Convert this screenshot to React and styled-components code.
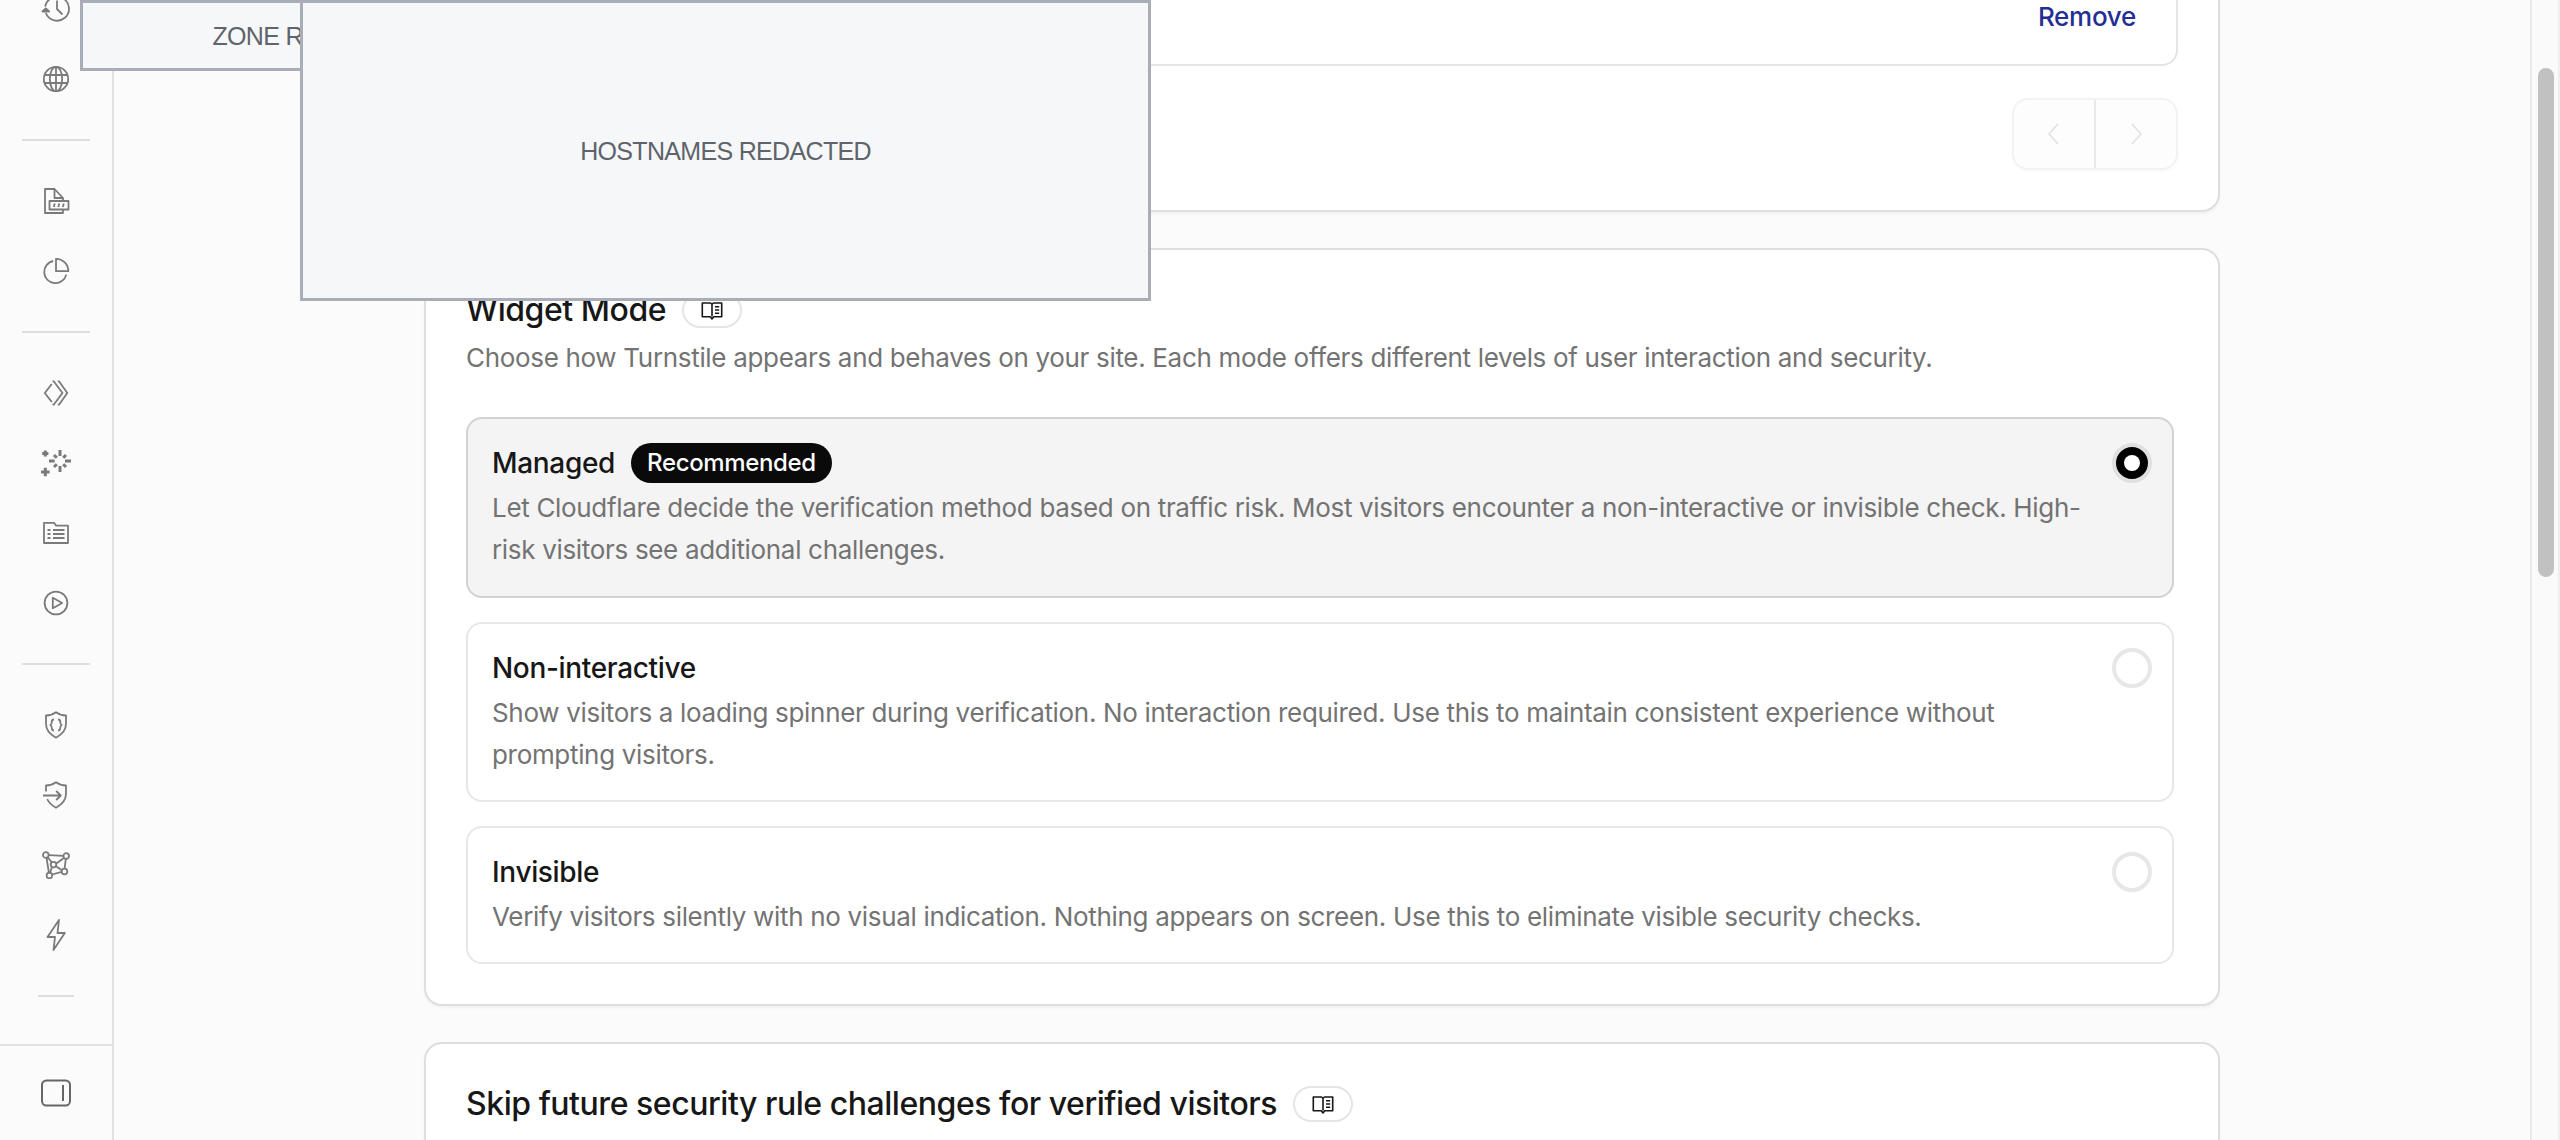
import React from "react";
import styled, { createGlobalStyle } from "styled-components";

const GlobalStyle = createGlobalStyle`
  * {
    box-sizing: border-box;
  }
  body {
    margin: 0;
    background-color: #fbfbfb;
    font-family: Inter, "Liberation Sans", sans-serif;
    -webkit-font-smoothing: antialiased;
  }
  h2, h3, p {
    margin: 0;
  }
`;

const Page = styled.div`
  position: relative;
  display: flex;
  width: 2560px;
  height: 1140px;
  overflow: hidden;
`;

const Sidebar = styled.aside`
  display: flex;
  flex-direction: column;
  width: 114px;
  height: 1140px;
  border-right: 2px solid #e2e2e2;
`;

const NavList = styled.nav`
  flex: 1;
  min-height: 0;
  overflow: hidden;
  display: flex;
  flex-direction: column;
  justify-content: flex-end;
  padding-bottom: 22px;
`;

const NavItem = styled.a`
  display: flex;
  flex: none;
  align-items: center;
  justify-content: center;
  height: 70px;
  color: #7a7a7a;
`;

const Separator = styled.div`
  display: flex;
  flex: none;
  align-items: center;
  justify-content: center;
  height: 52px;

  &::after {
    content: "";
    width: ${(props) => (props.$short ? "36px" : "68px")};
    height: 2px;
    background-color: #dedede;
  }
`;

const SidebarFooter = styled.div`
  display: flex;
  align-items: center;
  justify-content: center;
  height: 96px;
  border-top: 2px solid #e2e2e2;
  color: #666666;
`;

const Content = styled.main`
  flex: 1;
  display: flex;
  flex-direction: column;
  align-items: flex-start;
  gap: 36px;
  padding-left: 310px;
`;

const Card = styled.section`
  flex: none;
  width: 1796px;
  padding: 40px 42px 40px 40px;
  background-color: #ffffff;
  border: 2px solid #dedede;
  border-radius: 18px;
  box-shadow: 0 2px 3px rgba(0, 0, 0, 0.04);
`;

const HostnameCard = styled(Card)`
  display: flex;
  flex-direction: column;
  align-items: flex-end;
  gap: 32px;
  height: 212px;
  padding: 0 40px 40px;
  border-top: none;
  border-radius: 0 0 18px 18px;
`;

const HostnameRow = styled.div`
  display: flex;
  justify-content: flex-end;
  width: 100%;
  height: 66px;
  padding-right: 40px;
  border: 2px solid #e5e5e5;
  border-top: none;
  border-radius: 0 0 16px 16px;
`;

const RemoveLink = styled.a`
  color: #232e94;
  font-size: 26px;
  font-weight: 500;
  line-height: 34px;
  letter-spacing: -0.28px;
`;

const Pager = styled.div`
  display: flex;
  width: 166px;
  height: 72px;
  background-color: #fdfdfd;
  border: 2px solid #f2f2f2;
  border-radius: 16px;
  box-shadow: 0 2px 3px rgba(0, 0, 0, 0.02);
`;

const PagerButton = styled.span`
  flex: 1;
  display: flex;
  align-items: center;
  justify-content: center;
  color: #e3e3e3;

  & + & {
    border-left: 2px solid #e9e9e9;
  }
`;

const CardHeader = styled.div`
  display: flex;
  align-items: center;
  gap: 16px;
  height: 40px;
`;

const CardTitle = styled.h2`
  color: #171717;
  font-size: 32px;
  font-weight: 500;
  line-height: 40px;
  letter-spacing: -0.46px;
  white-space: nowrap;
`;

const DocsPill = styled.a`
  display: flex;
  align-items: center;
  justify-content: center;
  width: 60px;
  height: 36px;
  border: 2px solid #e5e5e5;
  border-radius: 18px;
  color: #171717;
`;

const CardText = styled.p`
  margin-top: 7px;
  color: #737373;
  font-size: 26px;
  line-height: 42px;
  letter-spacing: -0.322px;
`;

const OptionList = styled.div`
  display: flex;
  flex-direction: column;
  gap: 24px;
  width: 1708px;
  margin-top: 38px;
`;

const Option = styled.label`
  display: flex;
  justify-content: space-between;
  padding: ${(props) => (props.$selected ? "24px 20px 25px 24px" : "24px 20px 24px 24px")};
  background-color: ${(props) => (props.$selected ? "#f4f4f4" : "#ffffff")};
  border: 2px solid ${(props) => (props.$selected ? "#d2d2d2" : "#e7e7e7")};
  border-radius: 16px;
`;

const OptionBody = styled.div`
  width: 1600px;
`;

const OptionHeading = styled.div`
  display: flex;
  align-items: center;
  gap: 16px;
  height: 40px;
  margin-bottom: 4px;
`;

const OptionTitle = styled.h3`
  color: #171717;
  font-size: 28px;
  font-weight: 500;
  line-height: 40px;
  letter-spacing: -0.33px;
`;

const Badge = styled.span`
  padding: 0 16px;
  border-radius: 20px;
  background-color: #0a0a0a;
  color: #ffffff;
  font-size: 24px;
  font-weight: 500;
  line-height: 40px;
  letter-spacing: -0.34px;
`;

const OptionText = styled.p`
  color: #737373;
  font-size: 26px;
  line-height: 42px;
  letter-spacing: -0.322px;
`;

const Radio = styled.span`
  display: flex;
  flex: none;
  align-items: center;
  justify-content: center;
  width: 40px;
  height: 40px;
  border: 4px solid ${(props) => (props.$selected ? "#e0e0e0" : "#e7e7e7")};
  border-radius: 50%;
  background-color: ${(props) => (props.$selected ? "#000000" : "#ffffff")};

  &::after {
    content: "";
    width: 16px;
    height: 16px;
    border-radius: 50%;
    background-color: #ffffff;
  }
`;

const ScrollTrack = styled.div`
  width: 30px;
  padding: 68px 0 0 6px;
  background-color: #fafafa;
  border-left: 2px solid #e8e8e8;
  border-right: 2px solid #eeeeee;
`;

const ScrollThumb = styled.div`
  width: 16px;
  height: 509px;
  border-radius: 8px;
  background-color: #c1c1c1;
`;

// Covers sit on top of the page content
const Cover = styled.div`
  position: absolute;
  top: 0;
  left: ${(props) => props.$left}px;
  display: flex;
  align-items: center;
  justify-content: center;
  width: ${(props) => props.$width}px;
  height: ${(props) => props.$height}px;
  padding-top: 2px;
  background-color: #f6f7f9;
  border: 3px solid #a9adb7;
  color: #5f636b;
  font-family: "Liberation Sans", Arial, sans-serif;
  font-size: 25px;
  letter-spacing: -0.67px;
`;

const Icon = ({ size = 28, stroke = 1.8, children }) => (
  <svg
    width={size}
    height={size}
    viewBox={`0 0 ${size} ${size}`}
    fill="none"
    stroke="currentColor"
    strokeWidth={stroke}
    strokeLinejoin="round"
  >
    {children}
  </svg>
);

const ClockIcon = () => (
  <Icon size={32}>
    <path d="M5.8 20A12 12 0 1 0 5.2 13.5" />
    <path d="M2.5 18.5l3.3-3.2 3.4 3.2z" fill="currentColor" />
    <path d="M17 7.5V16l5.5 5.5" />
  </Icon>
);

const GlobeIcon = () => (
  <Icon>
    <circle cx="14" cy="14" r="12.2" />
    <ellipse cx="14" cy="14" rx="6.2" ry="12.2" />
    <path d="M14 1.8v24.4M2.8 10h22.4M2.8 18h22.4" />
  </Icon>
);

const DocumentIcon = () => (
  <Icon>
    <path d="M21 14v-3L12.5 2H3v24h18v-3.5" />
    <path d="M12.5 2v9H21M7.5 14h19v8.5h-19z" />
    <path d="M12.8 16.5l-1 3.5M17.3 16.5l-1 3.5M21.8 16.5l-1 3.5" />
  </Icon>
);

const PieIcon = () => (
  <Icon>
    <path d="M11.2 4A11.2 11.2 0 1 0 24.3 17.6" />
    <path d="M14 1.8v12.4h12.3A12.3 12.3 0 0 0 14 1.8z" />
  </Icon>
);

const WorkersIcon = () => (
  <Icon>
    <path d="M9.8 5L2.8 14l7 9" />
    <path d="M10.5 2.3h1.2L20.5 14l-8.8 11.7h-1.2M15.8 2.3h1.2L25.3 14 17 25.7h-1.2" />
  </Icon>
);

const SparkIcon = () => (
  <Icon size={32} stroke={3}>
    <path d="M20 3v6M20 19v6M9 14h5.7M25 14h6" />
    <path d="M14 8l2.8 2.8M26 8l-2.8 2.8M14 20l2.8-2.8M26 20l-2.8-2.8" />
    <path d="M5.3 3.5v6M2.2 6.5h6.2M5.3 20.8v8.5M1 25h8.6" />
  </Icon>
);

const FolderIcon = () => (
  <Icon>
    <path d="M2 24V3.8h10l2.2 2.8H26V24z" />
    <path d="M5.5 11h3M11 11h11.5M5.5 15h3M11 15h11.5M5.5 19h3M11 19h11.5" />
  </Icon>
);

const PlayIcon = () => (
  <Icon>
    <circle cx="14" cy="14" r="11.4" />
    <path d="M10.8 8.8v10.4l9.4-5.2z" />
  </Icon>
);

const ShieldCodeIcon = () => (
  <Icon>
    <path d="M14 1.2c3 2.2 6 3.2 10 3.3v8.3c0 6.5-4 10.7-10 13.9-6-3.2-10-7.4-10-13.9V4.5c4-.1 7-1.1 10-3.3z" />
    <path d="M12 8.5c-2 0-2.2.8-2.2 2.2 0 2-.3 2.8-1.5 3.3 1.2.5 1.5 1.3 1.5 3.3 0 1.4.2 2.2 2.2 2.2M16 8.5c2 0 2.2.8 2.2 2.2 0 2 .3 2.8 1.5 3.3-1.2.5-1.5 1.3-1.5 3.3 0 1.4-.2 2.2-2.2 2.2" />
  </Icon>
);

const ShieldArrowIcon = () => (
  <Icon>
    <path d="M4 10.5v-6c4-.1 7-1.1 10-3.3 3 2.2 6 3.2 10 3.3v8.3c0 6.5-4 10.7-10 13.9-4.2-2.3-7.2-5-8.8-8.7" />
    <path d="M1 14.5h17.5M14.2 10l4.6 4.5-4.6 4.5" />
  </Icon>
);

const NetworkIcon = () => (
  <Icon>
    <path d="M6.6 4.2l14.9.6M4.5 6.5l2.5 16M23.8 7.8l-1.2 9.7M10 23.5l9.7-2.7M5.7 6.3l4.2 5.2M14.3 12.5l7.2-5.2M14 15.2l5.8 4M9.8 16.5L8 22" />
    <circle cx="3.8" cy="4" r="2.8" />
    <circle cx="24.2" cy="5" r="2.8" />
    <circle cx="11.5" cy="13.6" r="2.8" />
    <circle cx="22.5" cy="20.5" r="2.8" />
    <circle cx="7.4" cy="24.5" r="2.8" />
  </Icon>
);

const BoltIcon = () => (
  <Icon size={32}>
    <path d="M19 1L7.5 18H15l-1.5 13L24.8 14H17.5z" />
  </Icon>
);

const PanelIcon = () => (
  <Icon size={32} stroke={2}>
    <rect x="2" y="3.5" width="28" height="25" rx="4.5" />
    <path d="M23 8v16" />
  </Icon>
);

const BookIcon = () => (
  <Icon size={24} stroke={1.6}>
    <path d="M12 18.5V6.2L10.5 5H2.3v13.8h7.9L12 21l1.8-2.2h7.9V5h-8.2L12 6.2" />
    <path d="M15 8.7h4.2M15 12h4.2M15 15.3h4.2" />
  </Icon>
);

const ChevronIcon = ({ right }) => (
  <Icon>
    <path d={right ? "M10 4l9 10-9 10" : "M18 4l-9 10 9 10"} />
  </Icon>
);

const navGroups = [
  [ClockIcon, GlobeIcon],
  [DocumentIcon, PieIcon],
  [WorkersIcon, SparkIcon, FolderIcon, PlayIcon],
  [ShieldCodeIcon, ShieldArrowIcon, NetworkIcon, BoltIcon],
];

const modes = [
  {
    title: "Managed",
    badge: "Recommended",
    text: "Let Cloudflare decide the verification method based on traffic risk. Most visitors encounter a non-interactive or invisible check. High-risk visitors see additional challenges.",
    selected: true,
  },
  {
    title: "Non-interactive",
    text: "Show visitors a loading spinner during verification. No interaction required. Use this to maintain consistent experience without prompting visitors.",
  },
  {
    title: "Invisible",
    text: "Verify visitors silently with no visual indication. Nothing appears on screen. Use this to eliminate visible security checks.",
  },
];

const App = () => {
  return (
    <>
      <GlobalStyle />
      <Page>
        <Sidebar>
          <NavList>
            {navGroups.map((group, index) => (
              <React.Fragment key={index}>
                {group.map((ItemIcon, i) => (
                  <NavItem key={i}>
                    <ItemIcon />
                  </NavItem>
                ))}
                <Separator $short={index === navGroups.length - 1} />
              </React.Fragment>
            ))}
          </NavList>
          <SidebarFooter>
            <PanelIcon />
          </SidebarFooter>
        </Sidebar>
        <Content>
          <HostnameCard>
            <HostnameRow>
              <RemoveLink>Remove</RemoveLink>
            </HostnameRow>
            <Pager>
              <PagerButton>
                <ChevronIcon />
              </PagerButton>
              <PagerButton>
                <ChevronIcon right />
              </PagerButton>
            </Pager>
          </HostnameCard>
          <Card>
            <CardHeader>
              <CardTitle>Widget Mode</CardTitle>
              <DocsPill>
                <BookIcon />
              </DocsPill>
            </CardHeader>
            <CardText>
              Choose how Turnstile appears and behaves on your site. Each mode
              offers different levels of user interaction and security.
            </CardText>
            <OptionList>
              {modes.map((mode) => (
                <Option key={mode.title} $selected={mode.selected}>
                  <OptionBody>
                    <OptionHeading>
                      <OptionTitle>{mode.title}</OptionTitle>
                      {mode.badge && <Badge>{mode.badge}</Badge>}
                    </OptionHeading>
                    <OptionText>{mode.text}</OptionText>
                  </OptionBody>
                  <Radio $selected={mode.selected} />
                </Option>
              ))}
            </OptionList>
          </Card>
          <Card>
            <CardHeader>
              <CardTitle>
                Skip future security rule challenges for verified visitors
              </CardTitle>
              <DocsPill>
                <BookIcon />
              </DocsPill>
            </CardHeader>
          </Card>
        </Content>
        <ScrollTrack>
          <ScrollThumb />
        </ScrollTrack>
        <Cover $left={80} $width={470} $height={71}>
          ZONE REDACTED
        </Cover>
        <Cover $left={300} $width={851} $height={301}>
          HOSTNAMES REDACTED
        </Cover>
      </Page>
    </>
  );
};

export default App;
